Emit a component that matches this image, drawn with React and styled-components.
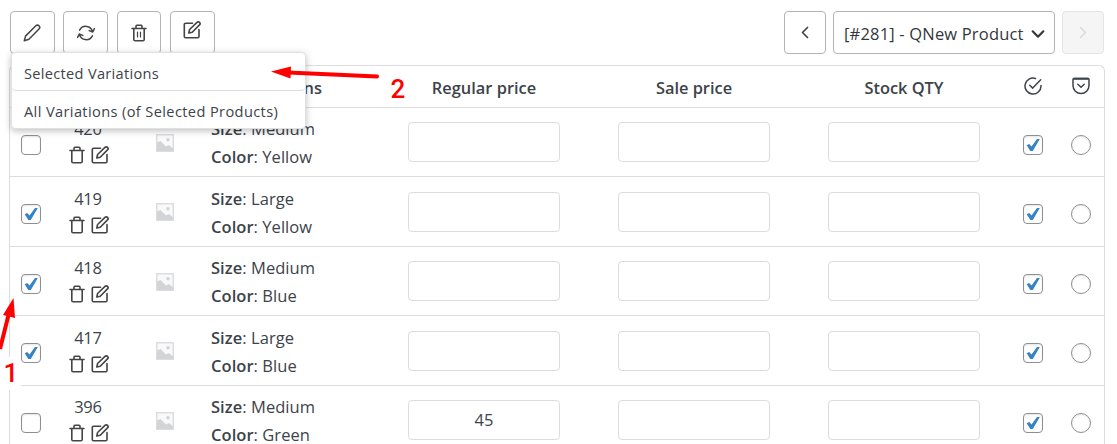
import React from 'react'
import styled, { createGlobalStyle } from 'styled-components';

const GlobalStyle = createGlobalStyle`
    * {
        box-sizing: border-box;
    }

    html, body {
        margin: 0;
        height: 100%;
        overflow: hidden;
        background-color: white;
    }

    body {
        font-family: "Open Sans", "Noto Sans", sans-serif;
        color: #3c434a;
    }
`

const Page = styled.div`
    position: relative;
    height: 444px;
    padding: 11px 12px 0 9px;
    overflow: hidden;
`

const Toolbar = styled.div`
    display: flex;
    justify-content: space-between;
    height: 54px;
    padding: 0 1px;
`

const ButtonGroup = styled.div`
    display: flex;
    gap: ${props => props.$gap};
`

const ToolButton = styled.button`
    display: flex;
    align-items: center;
    justify-content: center;
    width: ${props => props.$width || '44.6px'};
    height: 43px;
    padding: 0 0 ${props => props.$raise || '0'};
    background-color: ${props => props.disabled ? '#f5f5f5' : 'white'};
    border: 1px solid ${props => props.disabled ? '#e4e4e4' : '#b4b4b4'};
    border-radius: 4px;
    color: ${props => props.disabled ? '#dcdcdc' : '#444'};
`

const ProductSelect = styled.button`
    display: flex;
    align-items: center;
    justify-content: space-between;
    width: 222px;
    height: 43px;
    padding: 2px 8px 0 10px;
    background-color: white;
    border: 1px solid #b4b4b4;
    border-radius: 4px;
    color: #32373c;
    font-family: inherit;
    font-size: 16.5px;
    letter-spacing: 0.18px;
    white-space: nowrap;
`

const Menu = styled.div`
    position: absolute;
    z-index: 2;
    left: 11px;
    top: 52px;
    width: 295px;
    height: 77px;
    background-color: white;
    border: 1px solid #e0e0e0;
    border-radius: 4px;
    box-shadow: 0 2px 7px rgba(0, 0, 0, 0.25);
`

const MenuItem = styled.div`
    display: flex;
    align-items: center;
    height: 38px;
    padding: ${props => props.$divided ? '3px' : '1px'} 12px 0;
    border-bottom: ${props => props.$divided ? '1px solid #dcdcdc' : 'none'};
    border-radius: 4px;
    font-size: 14.6px;
    letter-spacing: ${props => props.$divided ? '0.3px' : '0.38px'};
    white-space: nowrap;
`

const Table = styled.div`
    border: 1px solid #dcdcde;
    border-bottom: none;
    border-radius: 6px 6px 0 0;
    height: 390px;
`

const Row = styled.div`
    display: grid;
    grid-template-columns: 42px 72px 83px 172px 210px 210px 210px 48px 1fr;
    height: 69.5px;
    border-bottom: 1px solid #dcdcde;
`

const HeaderRow = styled(Row)`
    height: 41.9px;
    font-size: 16.4px;
    font-weight: 600;
`

const Cell = styled.div`
    display: flex;
    align-items: center;
    justify-content: ${props => props.$align || 'center'};
    padding: ${props => props.$pad || '0'};
    white-space: nowrap;
`

const IdCell = styled.div`
    display: flex;
    flex-direction: column;
    align-items: center;
    padding-top: 7.3px;
    font-size: 16.5px;
    line-height: 28px;
    letter-spacing: -0.2px;
`

const Actions = styled.div`
    display: flex;
    gap: 5px;
    margin-top: 3px;
    color: #444;
`

const Attributes = styled.div`
    padding: 7.3px 0 0 4px;
    font-size: 16.5px;
    line-height: 28px;
    letter-spacing: 0.05px;
    white-space: nowrap;

    b {
        font-weight: 600;
    }
`

const Field = styled.input`
    width: 152px;
    height: 40px;
    padding: 0 0 2px;
    background-color: white;
    border: 1px solid #dcdcde;
    border-radius: 4px;
    color: #3c434a;
    font-family: inherit;
    font-size: 16.5px;
    text-align: center;
`

const Box = styled.span`
    display: flex;
    align-items: center;
    justify-content: center;
    width: 20px;
    height: 20px;
    background-color: white;
    border: 1px solid #8c8f94;
    border-radius: ${props => props.$round ? '50%' : '4px'};
    box-shadow: inset 0 1px 2px rgba(0, 0, 0, 0.1);
`

const Arrows = styled.svg`
    position: absolute;
    z-index: 3;
    left: 0;
    top: 0;
    pointer-events: none;
`

const Step = styled.div`
    position: absolute;
    z-index: 4;
    left: ${props => props.$left};
    top: ${props => props.$top};
    width: 20px;
    height: 33px;
    background-color: white;
    color: red;
    font-family: Roboto, sans-serif;
    font-size: 26px;
    font-weight: 500;
    line-height: 33px;
    text-align: center;
`

const Icon = ({size = 18, stroke = 1.5, children}) => (
    <svg width={size} height={size} viewBox="0 0 18 18" fill="none" stroke="currentColor" strokeWidth={stroke} strokeLinecap="round" strokeLinejoin="round">
        {children}
    </svg>
)

const PencilIcon = () => (
    <Icon>
        <path d="M1.3 16.7l1.2-4.6L12.8 1.8a2 2 0 0 1 3.2 3.2L5.9 15.3z" />
    </Icon>
)

const RefreshIcon = () => (
    <Icon>
        <path d="M2.6 6.2A7 7 0 0 1 15.6 7.6M17.4 4.6l-1.6 3.4-3.6-1.4M15.4 11.8A7 7 0 0 1 2.4 10.4M.6 13.4l1.6-3.4 3.6 1.4" />
    </Icon>
)

const TrashIcon = ({lines}) => (
    <Icon stroke={1.6}>
        <path d="M2 4.5h14M3.8 4.5v11a1.3 1.3 0 0 0 1.3 1.3h7.8a1.3 1.3 0 0 0 1.3-1.3v-11M6 4.3V2.3a1 1 0 0 1 1-1h4a1 1 0 0 1 1 1v2" />
        {lines && <path d="M7.5 8v5M10.5 8v5" strokeWidth="1.2" />}
    </Icon>
)

const EditIcon = () => (
    <Icon stroke={1.6}>
        <path d="M9.5 2.2H2.6A1.3 1.3 0 0 0 1.3 3.5v11.9a1.3 1.3 0 0 0 1.3 1.3h12.1a1.3 1.3 0 0 0 1.3-1.3V8.5" />
        <path d="M5.8 12l.8-3.5 7.4-7.1a1.6 1.6 0 0 1 2.5 2.5L9.2 11.2z" />
    </Icon>
)

const ImageIcon = () => (
    <svg width="18" height="18" viewBox="0 0 18 18">
        <rect x="0.75" y="0.75" width="16.5" height="16.5" fill="#f9f9fa" stroke="#dcdde0" strokeWidth="1.5" />
        <path d="M1 8.5l3.5-1.5 5.5 5.5 3-1.5 4 3.5v2.5H1z" fill="#d3d4d8" />
        <circle cx="12" cy="5.7" r="1.8" fill="#d3d4d8" />
    </svg>
)

const CheckBox = ({checked}) => (
    <Box>
        {checked && (
            <svg width="14" height="14" viewBox="0 0 14 14" fill="#3582c4">
                <path d="M0.7 7.3L3.2 5.9l2.3 2.6L11 1h2.8L6.8 13H4.3z" />
            </svg>
        )}
    </Box>
)

const variations = [
    {id: 420, size: 'Medium', color: 'Yellow', selected: false},
    {id: 419, size: 'Large', color: 'Yellow', selected: true},
    {id: 418, size: 'Medium', color: 'Blue', selected: true},
    {id: 417, size: 'Large', color: 'Blue', selected: true},
    {id: 396, size: 'Medium', color: 'Green', selected: false, price: '45'},
]

const VariationRow = ({item}) => (
    <Row>
        <Cell $pad="5.6px 0 0"><CheckBox checked={item.selected} /></Cell>
        <IdCell>
            {item.id}
            <Actions><TrashIcon /><EditIcon /></Actions>
        </IdCell>
        <Cell $pad="1px 1px 0 0"><ImageIcon /></Cell>
        <Attributes>
            <div><b>Size</b>: {item.size}</div>
            <div><b>Color</b>: {item.color}</div>
        </Attributes>
        <Cell><Field defaultValue={item.price} /></Cell>
        <Cell><Field /></Cell>
        <Cell><Field /></Cell>
        <Cell $pad="5.6px 0 0"><CheckBox checked /></Cell>
        <Cell $pad="5.6px 0 0"><Box $round /></Cell>
    </Row>
)

const App = () => {
    return (
        <>
        <GlobalStyle />
        <Page>
            <Toolbar>
                <ButtonGroup $gap="8.8px">
                    <ToolButton><PencilIcon /></ToolButton>
                    <ToolButton><RefreshIcon /></ToolButton>
                    <ToolButton><TrashIcon lines /></ToolButton>
                    <ToolButton $raise="5px"><EditIcon /></ToolButton>
                </ButtonGroup>
                <ButtonGroup $gap="7px">
                    <ToolButton $width="42px"><Icon stroke={1.7}><path d="M11.5 3.5L6.5 8.5l5 5" /></Icon></ToolButton>
                    <ProductSelect>
                        [#281] - QNew Product
                        <Icon size={16} stroke={2.4}><path d="M3 6l6 6 6-6" /></Icon>
                    </ProductSelect>
                    <ToolButton $width="42px" disabled><Icon stroke={1.7}><path d="M6.5 3.5l5 5-5 5" /></Icon></ToolButton>
                </ButtonGroup>
            </Toolbar>

            <Table>
                <HeaderRow>
                    <Cell />
                    <Cell />
                    <Cell />
                    <Cell $align="flex-end" $pad="3px 57px 0 0">Variations</Cell>
                    <Cell $pad="3px 0 0">Regular price</Cell>
                    <Cell $pad="3px 0 0">Sale price</Cell>
                    <Cell $pad="3px 0 0">Stock QTY</Cell>
                    <Cell $pad="0 0 1px"><Icon><path d="M17 8.5v.6A8 8 0 1 1 11.5 1.5M5.8 8.2l2.9 2.9 8-8.3" /></Icon></Cell>
                    <Cell $pad="0 0 1px">
                        <Icon>
                            <path d="M2 1.5h14a1 1 0 0 1 1 1v6a8 8 0 0 1-16 0v-6a1 1 0 0 1 1-1zM5.8 7.2L9 10.2l3.2-3" />
                            <path d="M2 1.8h14" strokeWidth="2" />
                        </Icon>
                    </Cell>
                </HeaderRow>
                {variations.map(item => <VariationRow key={item.id} item={item} />)}
            </Table>

            <Menu>
                <MenuItem $divided>Selected Variations</MenuItem>
                <MenuItem>All Variations (of Selected Products)</MenuItem>
            </Menu>

            <Step $left="1px" $top="357px">1</Step>
            <Step $left="388px" $top="73px">2</Step>
            <Arrows width="1117" height="444" viewBox="0 0 1117 444">
                <g stroke="red" strokeWidth="4" fill="red">
                    <path d="M377 76.5L288 72.5" strokeLinecap="round" />
                    <path d="M271 71.5l20-5-.5 12z" stroke="none" />
                    <path d="M0 349L9 313" />
                    <path d="M13.5 298L3 315l12 3z" stroke="none" />
                </g>
            </Arrows>
        </Page>
        </>
    )
}

export default App;
